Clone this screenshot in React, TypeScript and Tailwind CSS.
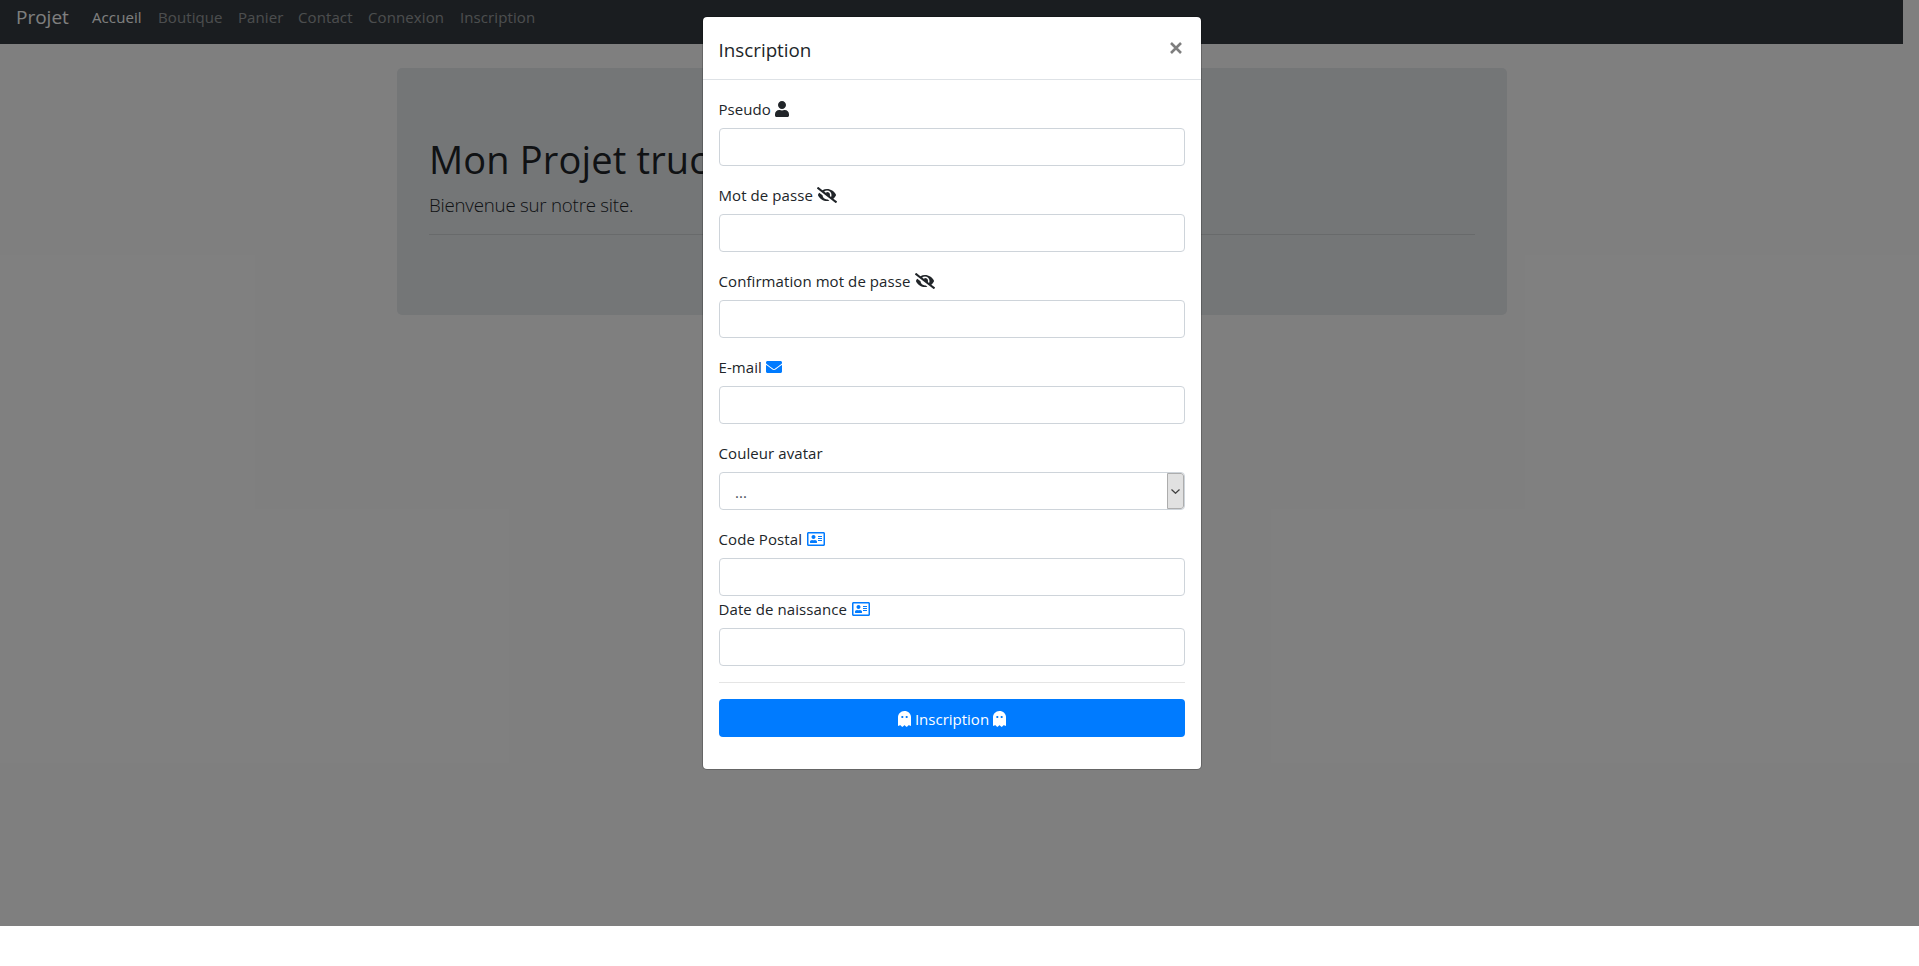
import React from 'react';
import { FaUser, FaEyeSlash, FaEnvelope, FaRegAddressCard, FaGhost } from 'react-icons/fa';

const links = [
  { label: 'Accueil', box: 'w-[66px] text-white' },
  { label: 'Boutique', box: 'w-[80px] text-white/50' },
  { label: 'Panier', box: 'w-[60px] text-white/50' },
  { label: 'Contact', box: 'w-[70px] text-white/50' },
  { label: 'Connexion', box: 'w-[92px] text-white/50' },
  { label: 'Inscription', box: 'w-[86px] text-white/50' },
];

type FieldProps = { label: string; icon?: React.ReactNode; tight?: boolean; children?: React.ReactNode };

function Field({ label, icon, tight, children }: FieldProps) {
  return (
    <div className={tight ? '' : 'mb-4'}>
      <label className="mb-2 -ml-[0.5px] flex h-6 items-center gap-1 whitespace-nowrap">
        <span className="pt-0.5 tracking-[0.08px]">{label}</span>
        {icon && <span className="ml-[0.5px] pt-0.5">{icon}</span>}
      </label>
      {children ?? <input className="block h-[38px] w-full rounded border border-[#ced4da] bg-white px-3 outline-none" />}
    </div>
  );
}

export default function App() {
  return (
    <div className="relative h-[966px] w-[1919px] overflow-hidden bg-white font-['Open_Sans','Noto_Sans',sans-serif] text-[15px] leading-6 text-[#212529]">
      <nav className="flex h-[44px] w-[1903px] items-center bg-[#343a40] pb-3 pl-4 whitespace-nowrap">
        <span className="mt-[2px] w-[76px] text-[19px] leading-[30px] text-white">Projet</span>
        {links.map((l) => (
          <a key={l.label} className={l.box + ' mt-px tracking-[0.1px]'}>{l.label}</a>
        ))}
      </nav>
      <main className="mt-6 ml-[397px] h-[247px] w-[1110px] rounded-[5px] bg-[#e9ecef] px-8 py-16">
        <h1 className="mb-2 h-12 text-[38px] leading-[54px] font-normal tracking-[0.15px] whitespace-nowrap">Mon Projet truc</h1>
        <p className="mb-4 h-[30px] text-[18.7px] leading-[33px] font-light tracking-[-0.22px]">Bienvenue sur notre site.</p>
        <hr className="border-black/10" />
      </main>

      <div className="absolute inset-x-0 top-0 h-[926px] bg-black/50" />

      <section className="absolute top-4 left-[702px] w-[500px] rounded-[5px] border border-black/20 bg-white bg-clip-padding">
        <header className="flex h-[63px] items-start justify-between border-b border-[#dee2e6] p-4">
          <h5 className="-ml-[0.5px] text-[18.8px] leading-[34px]">Inscription</h5>
          <button className="flex h-[30px] w-[18px] items-center justify-center text-black opacity-50">
            <svg className="size-[12px]" viewBox="0 0 12 12" fill="none" stroke="currentColor" strokeWidth="2.6">
              <path d="M1 1 11 11M11 1 1 11" />
            </svg>
          </button>
        </header>
        <form className="px-4 pt-4 pb-8">
          <Field label="Pseudo" icon={<FaUser className="h-4 w-[14px]" />} />
          <Field label="Mot de passe" icon={<FaEyeSlash className="h-4 w-5" />} />
          <Field label="Confirmation mot de passe" icon={<FaEyeSlash className="h-4 w-5" />} />
          <Field label="E-mail" icon={<FaEnvelope className="size-4 text-[#007bff]" />} />
          <Field label="Couleur avatar">
            <div className="flex h-[38px] justify-between overflow-hidden rounded border border-[#ced4da]">
              <span className="pt-[7px] pl-[15px] text-[#495057]">...</span>
              <span className="flex w-[17px] items-center justify-center rounded-r-[3px] border border-[#adadad] bg-[#e1e1e1]">
                <svg className="-ml-px h-[5px] w-[9px]" viewBox="0 0 9 5" fill="none" stroke="#404040" strokeWidth="1.2">
                  <path d="M.5.5 4.5 4.3 8.5.5" />
                </svg>
              </span>
            </div>
          </Field>
          <Field label="Code Postal" tight icon={<FaRegAddressCard className="h-4 w-[18px] text-[#007bff]" />} />
          <Field label="Date de naissance" tight icon={<FaRegAddressCard className="h-4 w-[18px] text-[#007bff]" />} />
          <hr className="my-4 border-black/10" />
          <button className="flex h-[38px] w-full items-center justify-center gap-1 rounded bg-[#007bff] text-white">
            <FaGhost preserveAspectRatio="none" className="mt-0.5 h-4 w-[13px]" />
            <span className="pt-0.5">Inscription</span>
            <FaGhost preserveAspectRatio="none" className="mt-0.5 h-4 w-[13px]" />
          </button>
        </form>
      </section>
    </div>
  );
}
